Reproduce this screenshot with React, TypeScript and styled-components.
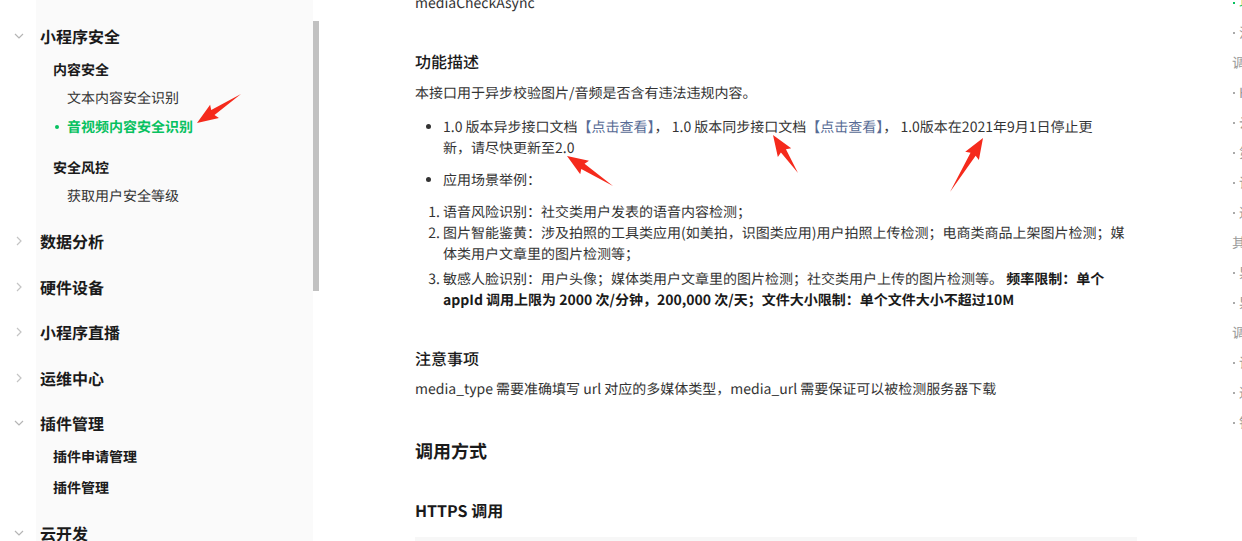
import React from "react";
import styled, { createGlobalStyle } from "styled-components";

const GlobalStyle = createGlobalStyle`
  html, body {
    margin: 0;
    padding: 0;
    background: #fff;
  }
  body {
    font-family: "Noto Sans CJK SC", sans-serif;
    color: #333;
    overflow: hidden;
    -webkit-font-smoothing: antialiased;
    text-rendering: geometricPrecision;
  }
  * {
    box-sizing: border-box;
  }
`;

const arrowPoints = (x1: number, y1: number, x2: number, y2: number) => {
  const head = 19;
  const hw = 8;
  const sw = 3;
  const dx = x2 - x1;
  const dy = y2 - y1;
  const len = Math.hypot(dx, dy);
  const ux = dx / len;
  const uy = dy / len;
  const nx = -uy;
  const ny = ux;
  const bx = x2 - ux * head;
  const by = y2 - uy * head;
  const pts = [
    [x1, y1],
    [bx + nx * sw, by + ny * sw],
    [bx + nx * hw - ux * 2, by + ny * hw - uy * 2],
    [x2, y2],
    [bx - nx * hw - ux * 2, by - ny * hw - uy * 2],
    [bx - nx * sw, by - ny * sw],
  ];
  return pts.map((p) => p.join(",")).join(" ");
};

const arrows = [
  [241, 94, 197, 123],
  [613, 186, 567, 156],
  [798, 173, 773, 135],
  [950, 192, 983, 138],
];

const topNav = ["数据分析", "硬件设备", "小程序直播", "运维中心"];

const outline = [
  { text: "功能描述", dot: true, active: true },
  { text: "注意事项", dot: true },
  { text: "调用方式" },
  { text: "HTTPS 调用", dot: true },
  { text: "云调用", dot: true },
  { text: "第三方调用", dot: true },
  { text: "请求参数", dot: true },
  { text: "返回参数", dot: true },
  { text: "其他说明" },
  { text: "异步检测结果推送", dot: true },
  { text: "异步检测结果", dot: true },
  { text: "调用示例" },
  { text: "请求数据示例", dot: true },
  { text: "返回数据示例", dot: true },
  { text: "错误码", dot: true },
];

const Chevron = ({ open }: { open?: boolean }) =>
  open ? (
    <svg width="10" height="6" viewBox="0 0 10 6">
      <polyline points="1,1 5,5 9,1" fill="none" stroke="#b5b5b5" strokeWidth="1.2" />
    </svg>
  ) : (
    <svg width="6" height="10" viewBox="0 0 6 10">
      <polyline points="1,1 5,5 1,9" fill="none" stroke="#c4c4c4" strokeWidth="1.2" />
    </svg>
  );

const App = () => {
  return (
    <Page lang="zh-CN">
      <GlobalStyle />
      <Sidebar>
        <NavItem $pb={12}>
          <NavHeader>
            <ChevronBox $open>
              <Chevron open />
            </ChevronBox>
            小程序安全
          </NavHeader>
          <Children $mt={2}>
            <GroupTitle>内容安全</GroupTitle>
            <Leaf>
              <DotSlot />
              文本内容安全识别
            </Leaf>
            <Leaf $active>
              <DotSlot>
                <Dot />
              </DotSlot>
              音视频内容安全识别
            </Leaf>
            <GroupTitle $mt={14}>安全风控</GroupTitle>
            <Leaf>
              <DotSlot />
              获取用户安全等级
            </Leaf>
          </Children>
        </NavItem>
        {topNav.map((t) => (
          <NavItem key={t} $pb={7.5}>
            <NavHeader>
              <ChevronBox>
                <Chevron />
              </ChevronBox>
              {t}
            </NavHeader>
          </NavItem>
        ))}
        <NavItem $pb={11}>
          <NavHeader>
            <ChevronBox $open>
              <Chevron open />
            </ChevronBox>
            插件管理
          </NavHeader>
          <Children $mt={-1}>
            <PlainLink>插件申请管理</PlainLink>
            <PlainLink>插件管理</PlainLink>
          </Children>
        </NavItem>
        <NavItem $pb={8}>
          <NavHeader>
            <ChevronBox $open>
              <Chevron open />
            </ChevronBox>
            云开发
          </NavHeader>
        </NavItem>
      </Sidebar>
      <ScrollTrack>
        <ScrollThumb />
      </ScrollTrack>

      <Main>
        <Para>mediaCheckAsync</Para>
        <SectionTitle $mt={35}>功能描述</SectionTitle>
        <Para $mt={10}>本接口用于异步校验图片/音频是否含有违法违规内容。</Para>
        <Bullets>
          <Item>
            1.0 版本异步接口文档<Link>【点击查看】</Link>， 1.0 版本同步接口文档
            <Link>【点击查看】</Link>， 1.0版本在2021年9月1日停止更
            <br />
            新，请尽快更新至2.0
          </Item>
          <Item $mt={11}>应用场景举例：</Item>
        </Bullets>
        <Numbered>
          <Item>语音风险识别：社交类用户发表的语音内容检测；</Item>
          <Item>
            图片智能鉴黄：涉及拍照的工具类应用(如美拍，识图类应用)用户拍照上传检测；电商类商品上架图片检测；媒
            <br />
            体类用户文章里的图片检测等；
          </Item>
          <Item $mt={4}>
            敏感人脸识别：用户头像；媒体类用户文章里的图片检测；社交类用户上传的图片检测等。{" "}
            <Strong>
              频率限制：单个 appId 调用上限为 2000 次/分钟，200,000 次/天；文件大小限制：单个文件大小不超过10M
            </Strong>
          </Item>
        </Numbered>
        <SectionTitle $mt={35}>注意事项</SectionTitle>
        <Para $mt={9}>
          media_type 需要准确填写 url 对应的多媒体类型，media_url 需要保证可以被检测服务器下载
        </Para>
        <PageTitle>调用方式</PageTitle>
        <SubTitle>HTTPS 调用</SubTitle>
        <CodeBlock />
      </Main>

      <Outline>
        {outline.map((o, i) => (
          <OutlineRow key={i} $active={o.active} $dot={o.dot}>
            {o.dot && <OutlineDot $active={o.active} />}
            {o.text}
          </OutlineRow>
        ))}
      </Outline>

      <Annotations width="1242" height="541" viewBox="0 0 1242 541">
        {arrows.map((a, i) => (
          <polygon key={i} points={arrowPoints(a[0], a[1], a[2], a[3])} fill="#f52a1c" />
        ))}
      </Annotations>
    </Page>
  );
};

export default App;

const Page = styled.div`
  position: relative;
  display: flex;
  align-items: flex-start;
  width: 1242px;
  height: 541px;
  overflow: hidden;
`;

const Sidebar = styled.nav`
  width: 313px;
  height: 541px;
  flex-shrink: 0;
  padding-top: 17px;
  background: linear-gradient(to right, #fff 36px, #fafafa 36px);
`;

const NavItem = styled.div<{ $pb: number }>`
  padding-bottom: ${(p) => p.$pb}px;
`;

const NavHeader = styled.div`
  display: flex;
  align-items: center;
  height: 38px;
  font-size: 16px;
  font-weight: 700;
  color: #1a1a1a;
`;

const ChevronBox = styled.span<{ $open?: boolean }>`
  display: flex;
  align-items: center;
  width: 40px;
  padding-left: ${(p) => (p.$open ? 14 : 16)}px;
`;

const Children = styled.div<{ $mt: number }>`
  margin-top: ${(p) => p.$mt}px;
`;

const GroupTitle = styled.div<{ $mt?: number }>`
  display: flex;
  align-items: center;
  height: 26px;
  margin-top: ${(p) => p.$mt ?? 0}px;
  padding-left: 53px;
  font-size: 14px;
  font-weight: 700;
  color: #1a1a1a;
`;

const Leaf = styled.div<{ $active?: boolean }>`
  display: flex;
  align-items: center;
  height: 29px;
  padding-left: 53px;
  font-size: 14px;
  font-weight: ${(p) => (p.$active ? 700 : 400)};
  color: ${(p) => (p.$active ? "#07c160" : "#333")};
`;

const DotSlot = styled.span`
  display: flex;
  align-items: center;
  width: 14px;
`;

const Dot = styled.span`
  width: 4px;
  height: 4px;
  margin-left: 2px;
  border-radius: 50%;
  background: #07c160;
`;

const PlainLink = styled.div`
  display: flex;
  align-items: center;
  height: 31px;
  padding-left: 53px;
  font-size: 14px;
  font-weight: 700;
  color: #1a1a1a;
`;

const ScrollTrack = styled.div`
  width: 6px;
  flex-shrink: 0;
  padding-top: 21px;
`;

const ScrollThumb = styled.div`
  height: 270px;
  background: #c1c1c1;
`;

const Main = styled.main`
  width: 712px;
  flex-shrink: 0;
  margin-left: 96px;
  margin-top: -7px;
  font-size: 14px;
  color: #333;
`;

const Para = styled.p<{ $mt?: number }>`
  margin: ${(p) => p.$mt ?? 0}px 0 0;
  font-size: 14px;
  line-height: 21px;
`;

const SectionTitle = styled.h3<{ $mt: number }>`
  margin: ${(p) => p.$mt}px 0 0;
  font-size: 16px;
  line-height: 24px;
  font-weight: 500;
  color: #1a1a1a;
`;

const PageTitle = styled.h2`
  margin: 38px 0 0;
  font-size: 18px;
  line-height: 26px;
  font-weight: 700;
  color: #1a1a1a;
`;

const SubTitle = styled.h4`
  margin: 34px 0 0;
  font-size: 16px;
  line-height: 24px;
  font-weight: 700;
  color: #1a1a1a;
`;

const Bullets = styled.ul`
  margin: 13px 0 0;
  padding-left: 28px;
  list-style: disc;
`;

const Numbered = styled.ol`
  margin: 11px 0 0;
  padding-left: 28px;
`;

const Item = styled.li<{ $mt?: number }>`
  margin-top: ${(p) => p.$mt ?? 0}px;
  font-size: 14px;
  line-height: 21px;
`;

const Link = styled.span`
  color: #576b95;
`;

const Strong = styled.strong`
  font-weight: 700;
  color: #1a1a1a;
`;

const CodeBlock = styled.div`
  width: calc(100% + 10px);
  height: 60px;
  margin-top: 15px;
  background: #f7f7f7;
`;

const Outline = styled.aside`
  width: 12px;
  flex-shrink: 0;
  margin-left: 103px;
  margin-top: -12px;
  overflow: hidden;
  white-space: nowrap;
`;

const OutlineRow = styled.div<{ $active?: boolean; $dot?: boolean }>`
  display: flex;
  align-items: center;
  height: 30px;
  font-size: 14px;
  padding-left: ${(p) => (p.$dot ? 3 : 2)}px;
  color: ${(p) => (p.$active ? "#07c160" : "#999")};
`;

const OutlineDot = styled.span<{ $active?: boolean }>`
  flex-shrink: 0;
  width: 2px;
  height: 2px;
  margin-right: 4px;
  background: ${(p) => (p.$active ? "#07c160" : "#aaa")};
`;

const Annotations = styled.svg`
  position: absolute;
  left: 0;
  top: 0;
  pointer-events: none;
`;
